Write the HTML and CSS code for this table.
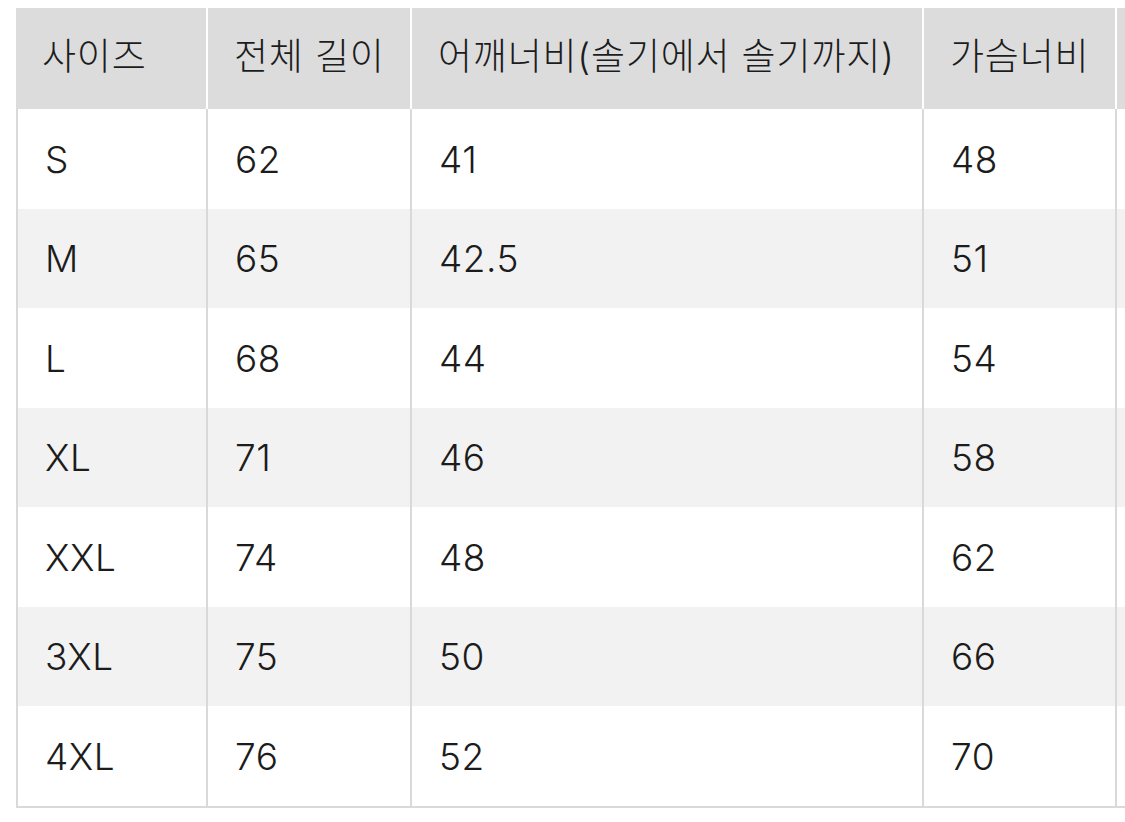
FILE: index.html
```html
<!DOCTYPE html>
<html lang="ko">
<head>
<meta charset="utf-8">
<title>사이즈표</title>
<link rel="stylesheet" href="styles.css">
</head>
<body>
<div class="wrap">
<table class="size-table">
  <colgroup>
    <col class="c1"><col class="c2"><col class="c3"><col class="c4"><col class="c5">
  </colgroup>
  <thead>
    <tr><th>사이즈</th><th>전체 길이</th><th>어깨너비(솔기에서 솔기까지)</th><th>가슴너비</th><th></th></tr>
  </thead>
  <tbody>
    <tr><td>S</td><td>62</td><td>41</td><td>48</td><td></td></tr>
    <tr><td>M</td><td>65</td><td>42.5</td><td>51</td><td></td></tr>
    <tr><td>L</td><td>68</td><td>44</td><td>54</td><td></td></tr>
    <tr><td>XL</td><td>71</td><td>46</td><td>58</td><td></td></tr>
    <tr><td>XXL</td><td>74</td><td>48</td><td>62</td><td></td></tr>
    <tr><td>3XL</td><td>75</td><td>50</td><td>66</td><td></td></tr>
    <tr><td>4XL</td><td>76</td><td>52</td><td>70</td><td></td></tr>
  </tbody>
</table>
</div>
</body>
</html>
```

FILE: styles.css
```css
html, body {
  margin: 0;
  padding: 0;
  background: #ffffff;
  overflow: hidden;
}
.wrap {
  padding: 8px 0 0 16px;
  width: 1400px;
}
.size-table {
  border-collapse: separate;
  border-spacing: 0;
  table-layout: fixed;
  width: 1300px;
  font-family: "Inter", "Noto Sans CJK KR", sans-serif;
  font-size: 37px;
  font-weight: 300;
  color: #1c1c1c;
}
.c1 { width: 192px; }
.c2 { width: 204px; }
.c3 { width: 512px; }
.c4 { width: 193px; }
.c5 { width: 199px; }
.size-table th,
.size-table td {
  text-align: left;
  vertical-align: middle;
  padding: 0 0 0 27px;
  white-space: nowrap;
  overflow: hidden;
  font-weight: 300;
  line-height: 1.2;
}
.size-table th {
  height: 99px;
  background: #dcdcdc;
  border-right: 2px solid #ffffff;
  padding-bottom: 2px;
  padding-left: 26px;
  letter-spacing: 0.8px;
}
.size-table td {
  height: 97.5px;
  border-right: 2px solid #d9d9d9;
  padding-top: 2px;
  letter-spacing: 0.5px;
}
.size-table td:first-child {
  border-left: 2px solid #d9d9d9;
}
.size-table tbody tr:nth-child(even) td {
  background: #f2f2f2;
}
.size-table tbody tr:last-child td {
  border-bottom: 2px solid #d9d9d9;
}
```
